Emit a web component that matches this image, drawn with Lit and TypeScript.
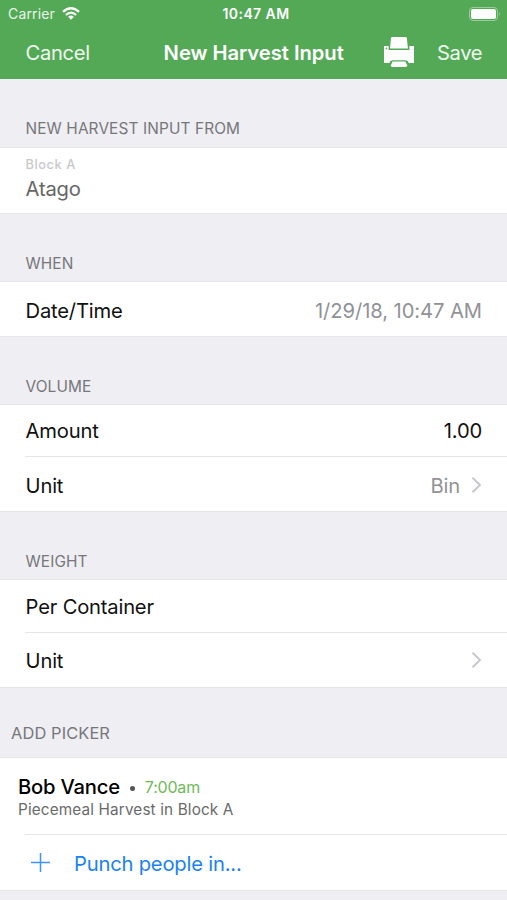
import { LitElement, html, css } from "lit";
import { customElement } from "lit/decorators.js";

const chevron = html`<svg class="chevron" width="11" height="18" viewBox="0 0 11 18">
  <path d="M1.5 1.8 L9 9 L1.5 16.2" fill="none" stroke="#c7c7cc" stroke-width="1.9" />
</svg>`;

@customElement("app-root")
export class AppRoot extends LitElement {
  static styles = css`
    :host {
      display: flex;
      flex-direction: column;
      width: 507px;
      height: 900px;
      overflow: hidden;
      background: #eeeef3;
      color: #111;
      font-family: Inter, "Liberation Sans", sans-serif;
      font-size: 20.2px;
      letter-spacing: -0.2px;
      white-space: nowrap;
    }
    * { box-sizing: border-box; }
    svg { display: block; flex: none; }
    .top { height: 79px; flex: none; background: #54a957; color: #fff; }
    .status {
      height: 27px;
      display: grid;
      grid-template-columns: 1fr auto 1fr;
      align-items: center;
      padding: 0 6px 0 8px;
      font-size: 14px;
      letter-spacing: 0.15px;
    }
    .carrier { display: flex; align-items: center; gap: 7px; color: #e9f6e9; }
    .clock { font-weight: 600; font-size: 14px; letter-spacing: 0.42px; padding-left: 3px; }
    .battery { justify-self: end; }
    .nav {
      height: 52px;
      display: grid;
      grid-template-columns: 138px 1fr 100px;
      align-items: center;
      padding: 0 25px 2px 25.6px;
    }
    .link { color: #effaef; }
    .cancel { letter-spacing: -0.35px; }
    .title { font-weight: 600; letter-spacing: -0.03px; }
    .actions { display: flex; align-items: center; justify-content: flex-end; gap: 22px; }
    .save { letter-spacing: -0.45px; }
    .head {
      flex: none;
      display: flex;
      align-items: flex-end;
      height: 67px;
      padding: 0 25.5px 7px;
      font-size: 15.4px;
      letter-spacing: 0.12px;
      line-height: 20px;
      color: #77777b;
    }
    .first { height: 68px; padding-bottom: 8px; }
    .pickers { height: 69px; padding: 0 11px 14px; font-size: 16.4px; }
    .group { flex: none; background: #fff; border-top: 1px solid #e6e6e9; border-bottom: 1px solid #e6e6e9; }
    .row { display: flex; align-items: center; justify-content: space-between; margin-left: 25px; padding: 0 25px 0 0.6px; }
    .row + .row { border-top: 1px solid #e5e5e7; }
    .value { color: #929296; letter-spacing: -0.08px; }
    .dark { color: #111; }
    .more { display: flex; align-items: center; gap: 11px; color: #929296; }
    .chevron { margin-bottom: 2px; }
    .source { height: 67px; padding: 9px 25.6px 0; color: #666; line-height: 25px; }
    .caption { font-size: 12.8px; font-weight: 500; letter-spacing: 0.55px; line-height: 15px; color: #c8c8ca; }
    .variety { padding-top: 4px; }
    .date { height: 54px; padding-top: 2px; }
    .amount { height: 51px; }
    .volume-unit { height: 55px; padding-top: 3px; }
    .container { height: 52px; padding-top: 1px; }
    .weight-unit { height: 55px; padding-top: 1px; }
    .person { height: 76px; padding: 17px 18px 0; }
    .line { display: flex; align-items: center; line-height: 24px; }
    .name { font-weight: 500; color: #000; }
    .dot { width: 5px; height: 5px; border-radius: 50%; background: #555; margin: 2px 10px 0; }
    .time { font-size: 16px; color: #6fba58; }
    .detail { font-size: 15.3px; line-height: 20px; padding-top: 1px; color: #6a6a6a; letter-spacing: 0.14px; }
    .punch { height: 56px; margin-left: 25px; padding: 1px 0 0 6px; border-top: 1px solid #e5e5e7; display: flex; align-items: center; gap: 24px; color: #1a82f2; }
    .plus { margin-bottom: 2px; }
  `;

  render() {
    return html`
      <header class="top">
        <div class="status">
          <span class="carrier"><span>Carrier</span>
            <svg width="18" height="13" viewBox="0 0 18 13">
              <g fill="none" stroke="#fff" stroke-width="2.2">
                <path d="M1 4.9 Q9 -2.4 17 4.9" />
                <path d="M3.9 8 Q9 3.4 14.1 8" />
              </g>
              <path d="M6.1 9.8 Q9 7.3 11.9 9.8 L9 12.7 Z" fill="#fff" />
            </svg>
          </span>
          <span class="clock">10:47 AM</span>
          <svg class="battery" width="32" height="14" viewBox="0 0 32 14">
            <rect x="0.5" y="0.5" width="28" height="13" rx="3.5" fill="none" stroke="#98cc9a" />
            <rect x="2" y="2" width="25" height="10" rx="2" fill="#fff" />
            <path d="M30 5 Q31.8 7 30 9 Z" fill="#a6d3a8" />
          </svg>
        </div>
        <div class="nav">
          <span class="link cancel">Cancel</span>
          <span class="title">New Harvest Input</span>
          <div class="actions">
            <svg width="32" height="32" viewBox="0 0 32 32" fill="#fff">
              <path d="M9 1 H22.6 Q23.6 1 23.8 2 L25 12.4 H7 L8 2 Q8.1 1 9 1 Z" />
              <path d="M1 10 H5.6 V14 H26.4 V10 H31 V27 H25.6 Q25 24.2 22 24.2 H10 Q7 24.2 6.4 27 H1 Z" />
              <path d="M9.6 25.6 H22.4 L24.2 29.5 Q24 31 22 31 H10 Q8 31 7.8 29.5 Z" />
              <circle cx="3.4" cy="12.4" r="0.8" fill="#54a957" />
            </svg>
            <span class="link save">Save</span>
          </div>
        </div>
      </header>

      <div class="head first">NEW HARVEST INPUT FROM</div>
      <div class="group source">
        <div class="caption">Block A</div>
        <div class="variety">Atago</div>
      </div>

      <div class="head">WHEN</div>
      <div class="group">
        <div class="row date"><span>Date/Time</span><span class="value">1/29/18, 10:47 AM</span></div>
      </div>

      <div class="head">VOLUME</div>
      <div class="group">
        <div class="row amount"><span>Amount</span><span class="dark">1.00</span></div>
        <div class="row volume-unit"><span>Unit</span><span class="more">Bin ${chevron}</span></div>
      </div>

      <div class="head">WEIGHT</div>
      <div class="group">
        <div class="row container"><span>Per Container</span></div>
        <div class="row weight-unit"><span>Unit</span><span class="more">${chevron}</span></div>
      </div>

      <div class="head pickers">ADD PICKER</div>
      <div class="group">
        <div class="person">
          <div class="line"><span class="name">Bob Vance</span><i class="dot"></i><span class="time">7:00am</span></div>
          <div class="detail">Piecemeal Harvest in Block A</div>
        </div>
        <div class="punch">
          <svg class="plus" width="19" height="19" viewBox="0 0 19 19"><path d="M9.5 0 V19 M0 9.5 H19" stroke="#3d95ee" stroke-width="1.5" /></svg>
          <span>Punch people in...</span>
        </div>
      </div>
    `;
  }
}
